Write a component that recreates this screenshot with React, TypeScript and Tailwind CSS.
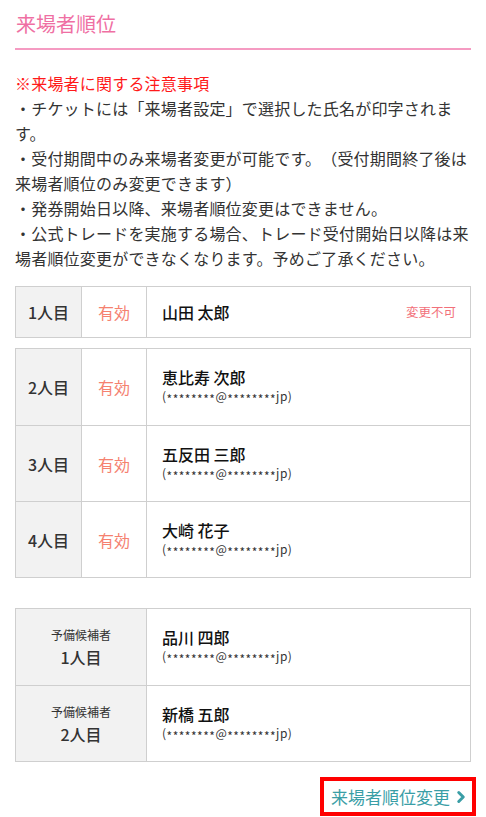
import { ChevronRight } from "lucide-react";

interface Attendee {
  label: string;
  sub?: string;
  status?: string;
  name: string;
  masked?: boolean;
  note?: string;
}

const main: Attendee = { label: "1人目", status: "有効", name: "山田 太郎", note: "変更不可" };

const companions: Attendee[] = [
  { label: "2人目", status: "有効", name: "恵比寿 次郎", masked: true },
  { label: "3人目", status: "有効", name: "五反田 三郎", masked: true },
  { label: "4人目", status: "有効", name: "大崎 花子", masked: true },
];

const reserves: Attendee[] = [
  { label: "1人目", sub: "予備候補者", name: "品川 四郎", masked: true },
  { label: "2人目", sub: "予備候補者", name: "新橋 五郎", masked: true },
];

function MaskedMail() {
  // asterisks sit lower than the default glyph so they look centred like the original
  return (
    <span className="mt-[1px] text-[12px] leading-[16px] tracking-[0.5px] text-[#333]">
      (<span className="align-[-3px]">********</span>@<span className="align-[-3px]">********</span>jp)
    </span>
  );
}

function NameCell({ a }: { a: Attendee }) {
  return (
    <div className="flex flex-1 items-center justify-between pl-[15px] pr-[14px]">
      <div className="flex flex-col">
        <span className="text-[16px] leading-[20px] font-medium text-[#111]">{a.name}</span>
        {a.masked && <MaskedMail />}
      </div>
      {a.note && <span className="text-[12.5px] text-[#f2707a]">{a.note}</span>}
    </div>
  );
}

function Row({ a, height, first }: { a: Attendee; height: string; first?: boolean }) {
  return (
    <div className={`flex ${height} ${first ? "" : "border-t border-[#cfcfcf]"}`}>
      <div className="flex w-[66px] shrink-0 items-center justify-center border-r border-[#cfcfcf] bg-[#f2f2f2] text-[16px] font-medium text-[#333]">
        {a.label}
      </div>
      <div className="flex w-[65px] shrink-0 items-center justify-center border-r border-[#cfcfcf] text-[16px] text-[#f5816f]">
        {a.status}
      </div>
      <NameCell a={a} />
    </div>
  );
}

function ReserveRow({ a, first }: { a: Attendee; first?: boolean }) {
  return (
    <div className={`flex h-[76px] ${first ? "" : "border-t border-[#cfcfcf]"}`}>
      <div className="flex w-[131px] shrink-0 flex-col items-center justify-center gap-[4px] border-r border-[#cfcfcf] bg-[#f2f2f2] text-[#333]">
        <span className="text-[12px] leading-[16px]">{a.sub}</span>
        <span className="text-[16px] leading-[20px] font-medium">{a.label}</span>
      </div>
      <NameCell a={a} />
    </div>
  );
}

export default function App() {
  return (
    <div
      className="min-h-[817px] bg-white px-[15px] pb-[2px] text-[#333]"
      style={{ fontFamily: '"Noto Sans CJK JP", "Noto Sans", sans-serif' }}
    >
      {/* Section heading */}
      <h2 className="border-b-2 border-[#f59bc2] pt-[10px] pb-[10px] pl-[1px] text-[20px] leading-[28px] text-[#ef6fa3]">
        来場者順位
      </h2>

      {/* Notes */}
      <div className="mt-[21px] text-[16px] leading-[25px] tracking-[0.2px] [text-spacing-trim:space-all]">
        <p className="text-[#ff1a1a]">※来場者に関する注意事項</p>
        <p>・チケットには「来場者設定」で選択した氏名が印字されます。</p>
        <p>・受付期間中のみ来場者変更が可能です。（受付期間終了後は来場者順位のみ変更できます）</p>
        <p>・発券開始日以降、来場者順位変更はできません。</p>
        <p>・公式トレードを実施する場合、トレード受付開始日以降は来場者順位変更ができなくなります。予めご了承ください。</p>
      </div>

      {/* Main applicant */}
      <div className="mt-[15px] border border-[#cfcfcf]">
        <Row a={main} height="h-[50px]" first />
      </div>

      {/* Companions */}
      <div className="mt-[10px] border border-[#cfcfcf]">
        {companions.map((c, i) => (
          <Row key={c.label} a={c} height="h-[76px]" first={i === 0} />
        ))}
      </div>

      {/* Reserve candidates */}
      <div className="mt-[30px] border border-[#cfcfcf]">
        {reserves.map((r, i) => (
          <ReserveRow key={r.label} a={r} first={i === 0} />
        ))}
      </div>

      <div className="mt-[15px] flex justify-end">
        <button className="-mr-[5px] flex h-[39px] items-center border-4 border-[#ff0000] pl-[7px] pr-[2px] text-[17px] text-[#3a9ea6]">
          来場者順位変更
          <ChevronRight className="ml-[2px] h-[18px] w-[18px]" strokeWidth={4} />
        </button>
      </div>
    </div>
  );
}
